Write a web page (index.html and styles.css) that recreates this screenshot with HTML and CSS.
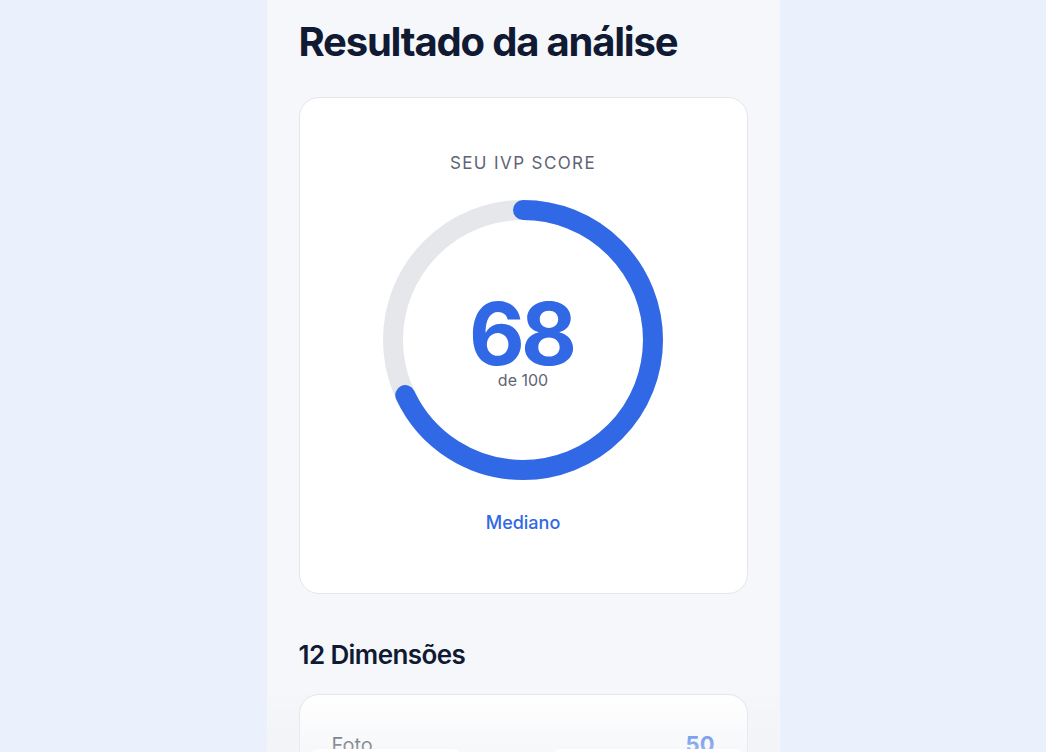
FILE: index.html
```html
<!DOCTYPE html>
<html lang="pt">
<head>
<meta charset="utf-8">
<title>Resultado da análise</title>
<link rel="stylesheet" href="styles.css">
</head>
<body>
<main class="column">
  <h1 class="title">Resultado da análise</h1>
  <section class="card score-card">
    <div class="score-label">SEU IVP SCORE</div>
    <div class="ring">
      <svg width="280" height="280" viewBox="0 0 280 280">
        <circle cx="140" cy="140" r="130" fill="none" stroke="#e5e7eb" stroke-width="20"/>
        <circle cx="140" cy="140" r="130" fill="none" stroke="#3068e6" stroke-width="20" stroke-linecap="round"
          stroke-dasharray="555.4 1000" transform="rotate(-90 140 140)"/>
      </svg>
      <div class="ring-center">
        <div class="score-value">68</div>
        <div class="score-max">de 100</div>
      </div>
    </div>
    <div class="score-level">Mediano</div>
  </section>
  <h2 class="section-title">12 Dimensões</h2>
  <section class="card dims-card">
    <div class="dim-row">
      <span class="dim-name">Foto</span>
      <span class="dim-value">50</span>
    </div>
  </section>
</main>
<div class="bottom-fade">
  <div class="fade-pill left"></div>
  <div class="fade-pill right"></div>
</div>
</body>
</html>
```

FILE: styles.css
```css
* { box-sizing: border-box; }
html, body { margin: 0; padding: 0; height: 100%; overflow: hidden; }
body {
  background: #eaf1fd;
  font-family: Inter, "Noto Sans", sans-serif;
  color: #111a33;
}
.column {
  width: 513px;
  margin: 0 auto;
  min-height: 100vh;
  background: #f5f7fa;
  padding: 14px 32px 0;
}
.title {
  margin: 0;
  font-size: 40px;
  line-height: 56px;
  font-weight: 700;
  letter-spacing: -1.2px;
  color: #111a33;
}
.card {
  background: #fff;
  border: 1px solid #e3e6ea;
  border-radius: 20px;
}
.score-card {
  margin-top: 27px;
  padding: 55px 0 58px;
  display: flex;
  flex-direction: column;
  align-items: center;
}
.score-label {
  font-size: 17px;
  line-height: 20px;
  letter-spacing: 1.4px;
  color: #5f6475;
}
.ring {
  position: relative;
  width: 280px;
  height: 280px;
  margin-top: 27px;
}
.ring svg { display: block; }
.ring-center {
  position: absolute;
  inset: 0;
  display: flex;
  flex-direction: column;
  align-items: center;
  justify-content: center;
  padding-top: 8px;
}
.score-value {
  font-size: 86px;
  line-height: 72px;
  font-weight: 700;
  letter-spacing: -4px;
  padding-right: 4px;
  color: #3068e6;
}
.score-max {
  font-size: 16px;
  line-height: 20px;
  color: #5f6475;
}
.score-level {
  margin-top: 31px;
  font-size: 18px;
  line-height: 24px;
  font-weight: 500;
  color: #3068e6;
}
.section-title {
  margin: 45px 0 23px;
  font-size: 26px;
  line-height: 32px;
  font-weight: 600;
  letter-spacing: -0.6px;
  color: #111a33;
}
.dims-card {
  padding: 37px 32px 40px;
  border-bottom-left-radius: 0;
  border-bottom-right-radius: 0;
}
.dim-row {
  display: flex;
  justify-content: space-between;
  align-items: baseline;
}
.dim-name {
  font-size: 20px;
  line-height: 24px;
  color: #2f3443;
}
.dim-value {
  font-size: 22px;
  line-height: 24px;
  font-weight: 700;
  color: #3068e6;
}
.bottom-fade {
  position: fixed;
  left: 266px;
  width: 513px;
  bottom: 0;
  height: 60px;
  background: linear-gradient(to bottom, rgba(245,247,250,0) 0%, rgba(240,242,246,0.55) 100%);
  pointer-events: none;
}
.fade-pill {
  position: absolute;
  top: 57px;
  height: 30px;
  background: #fff;
  border-radius: 16px;
}
.fade-pill.left { left: 40px; width: 160px; }
.fade-pill.right { left: 282px; width: 200px; }
```
